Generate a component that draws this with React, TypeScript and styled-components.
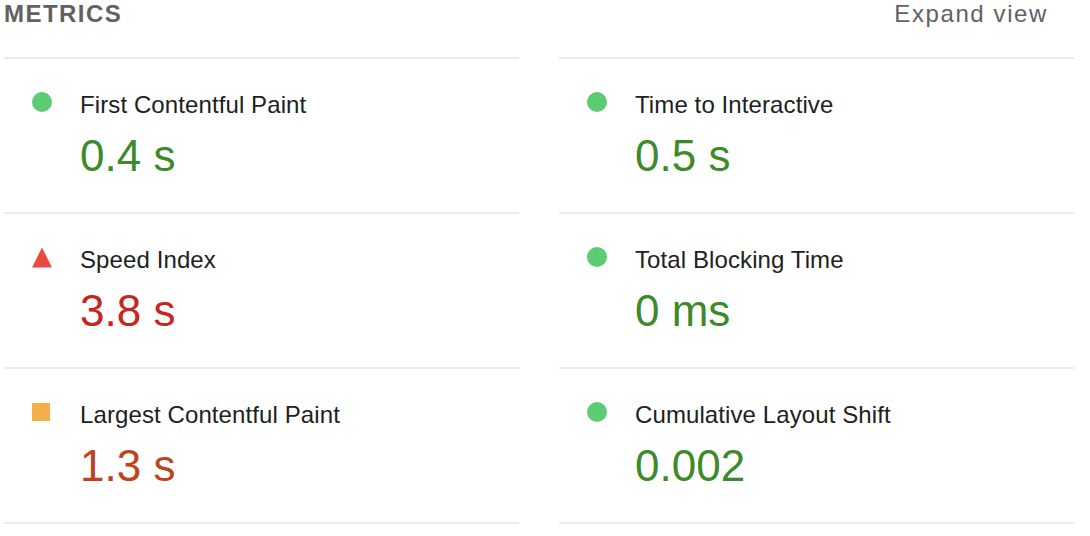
import React from "react";
import styled, { createGlobalStyle, css } from "styled-components";

const GlobalStyle = createGlobalStyle`
  html, body {
    margin: 0;
    padding: 0;
    background: #ffffff;
  }
  body {
    font-family: "Liberation Sans", Arial, Helvetica, sans-serif;
    -webkit-font-smoothing: antialiased;
  }
`;

type Rating = "pass" | "average" | "fail";

const valueColors: Record<Rating, string> = {
  pass: "#3c8a29",
  average: "#c0421c",
  fail: "#c42720",
};

const Section = styled.section`
  margin-left: 4px;
  width: 1070px;
`;

const Header = styled.div`
  display: flex;
  justify-content: space-between;
  align-items: flex-start;
  height: 57px;
  padding-right: 26px;
`;

const Title = styled.h2`
  margin: 0;
  font-size: 24px;
  line-height: 28px;
  font-weight: 700;
  letter-spacing: 1.45px;
  text-transform: uppercase;
  color: #616161;
`;

const Toggle = styled.span`
  padding-top: 0;
  font-size: 24px;
  line-height: 28px;
  letter-spacing: 1.6px;
  color: #616161;
`;

const Grid = styled.div`
  display: grid;
  grid-template-columns: 1fr 1fr;
  column-gap: 40px;
`;

const Metric = styled.div`
  display: flex;
  align-items: flex-start;
  gap: 28px;
  padding: 32px 0 30px 28px;
  border-bottom: 2px solid #ebebeb;

  &:nth-child(-n + 2) {
    border-top: 2px solid #ebebeb;
  }
`;

const IconBox = styled.div`
  flex: none;
  width: 20px;
  height: 20px;
  margin-top: 1px;
  display: flex;
  align-items: center;
  justify-content: flex-start;
`;

const Shape = styled.span<{ $rating: Rating }>`
  display: block;
  ${({ $rating }) =>
    $rating === "pass"
      ? css`
          width: 20px;
          height: 20px;
          border-radius: 50%;
          background: #5ccc73;
        `
      : $rating === "average"
      ? css`
          width: 18px;
          height: 18px;
          background: #f4ae4c;
        `
      : css`
          width: 20px;
          height: 20px;
          margin-top: 1px;
          background: #eb4b3f;
          clip-path: polygon(50% 0%, 100% 100%, 0% 100%);
        `}
`;

const Text = styled.div`
  display: flex;
  flex-direction: column;
  gap: 11px;
`;

const Label = styled.div`
  font-size: 24px;
  line-height: 28px;
  letter-spacing: 0.1px;
  color: #212121;
`;

const Value = styled.div<{ $rating: Rating }>`
  font-size: 44px;
  line-height: 52px;
  color: ${({ $rating }) => valueColors[$rating]};
`;

const metrics: { label: string; value: string; rating: Rating }[] = [
  { label: "First Contentful Paint", value: "0.4 s", rating: "pass" },
  { label: "Time to Interactive", value: "0.5 s", rating: "pass" },
  { label: "Speed Index", value: "3.8 s", rating: "fail" },
  { label: "Total Blocking Time", value: "0 ms", rating: "pass" },
  { label: "Largest Contentful Paint", value: "1.3 s", rating: "average" },
  { label: "Cumulative Layout Shift", value: "0.002", rating: "pass" },
];

export default function App() {
  return (
    <>
      <GlobalStyle />
      <Section>
        <Header>
          <Title>Metrics</Title>
          <Toggle>Expand view</Toggle>
        </Header>
        <Grid>
          {metrics.map((m) => (
            <Metric key={m.label}>
              <IconBox>
                <Shape $rating={m.rating} />
              </IconBox>
              <Text>
                <Label>{m.label}</Label>
                <Value $rating={m.rating}>{m.value}</Value>
              </Text>
            </Metric>
          ))}
        </Grid>
      </Section>
    </>
  );
}
